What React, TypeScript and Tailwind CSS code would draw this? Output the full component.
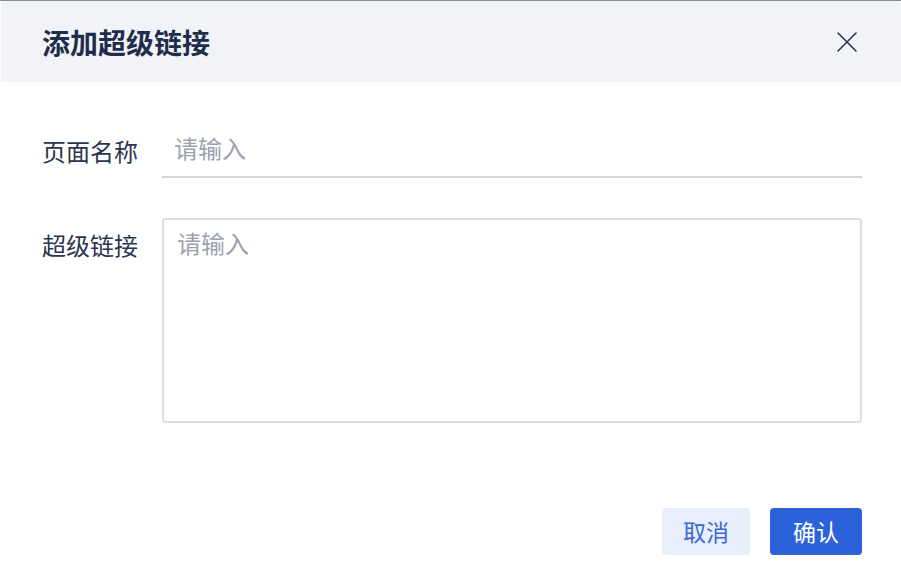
import React from 'react';

const font = { fontFamily: '"Noto Sans CJK SC", "Noto Sans", sans-serif' };

export default function App() {
  return (
    <div className="w-[901px] h-[577px] bg-white border-t border-[#868c99] overflow-hidden" style={font}>
      <div className="ml-[1px] h-[576px] bg-white rounded-[4px] overflow-hidden flex flex-col">
        {/* Header */}
        <div className="h-[81px] bg-[#f1f3f7] flex items-center justify-between pl-[41px] pr-[42px] shrink-0">
          <h1 className="text-[28px] font-bold text-[#1f2d4d] leading-none">添加超级链接</h1>
          <button className="w-[24px] h-[24px] flex items-center justify-center text-[#2a3650]">
            <svg width="22" height="22" viewBox="0 0 22 22" fill="none" stroke="currentColor" strokeWidth="1.6" strokeLinecap="round">
              <path d="M2 2 L20 20 M20 2 L2 20" />
            </svg>
          </button>
        </div>

        {/* Form */}
        <div className="flex-1 flex flex-col pl-[41px] pr-[39px] pt-[44px]">
          <div className="flex items-start">
            <label className="w-[120px] shrink-0 text-[24px] text-[#2b3550] leading-[50px]">页面名称</label>
            <input
              className="flex-1 h-[52px] border-b-2 border-[#d6d9e0] px-[12px] pb-[7px] text-[24px] text-[#2b3550] placeholder:text-[#9ba2ae] outline-none"
              placeholder="请输入"
            />
          </div>

          <div className="flex items-start mt-[40px]">
            <label className="w-[120px] shrink-0 text-[24px] text-[#2b3550] leading-[50px] pt-[2px]">超级链接</label>
            <textarea
              className="flex-1 h-[205px] border-2 border-[#d9dce3] rounded-[4px] px-[13px] py-[6px] text-[24px] leading-[34px] text-[#2b3550] placeholder:text-[#9ba2ae] outline-none resize-none"
              placeholder="请输入"
            />
          </div>
        </div>

        {/* Footer */}
        <div className="flex justify-end gap-[20px] pr-[39px] pb-[22px]">
          <button className="w-[88px] h-[47px] rounded-[4px] bg-[#e8eefb] text-[#3a69d6] text-[23px]">取消</button>
          <button className="w-[92px] h-[47px] rounded-[4px] bg-[#2b62d9] text-white text-[23px]">确认</button>
        </div>
      </div>
    </div>
  );
}
